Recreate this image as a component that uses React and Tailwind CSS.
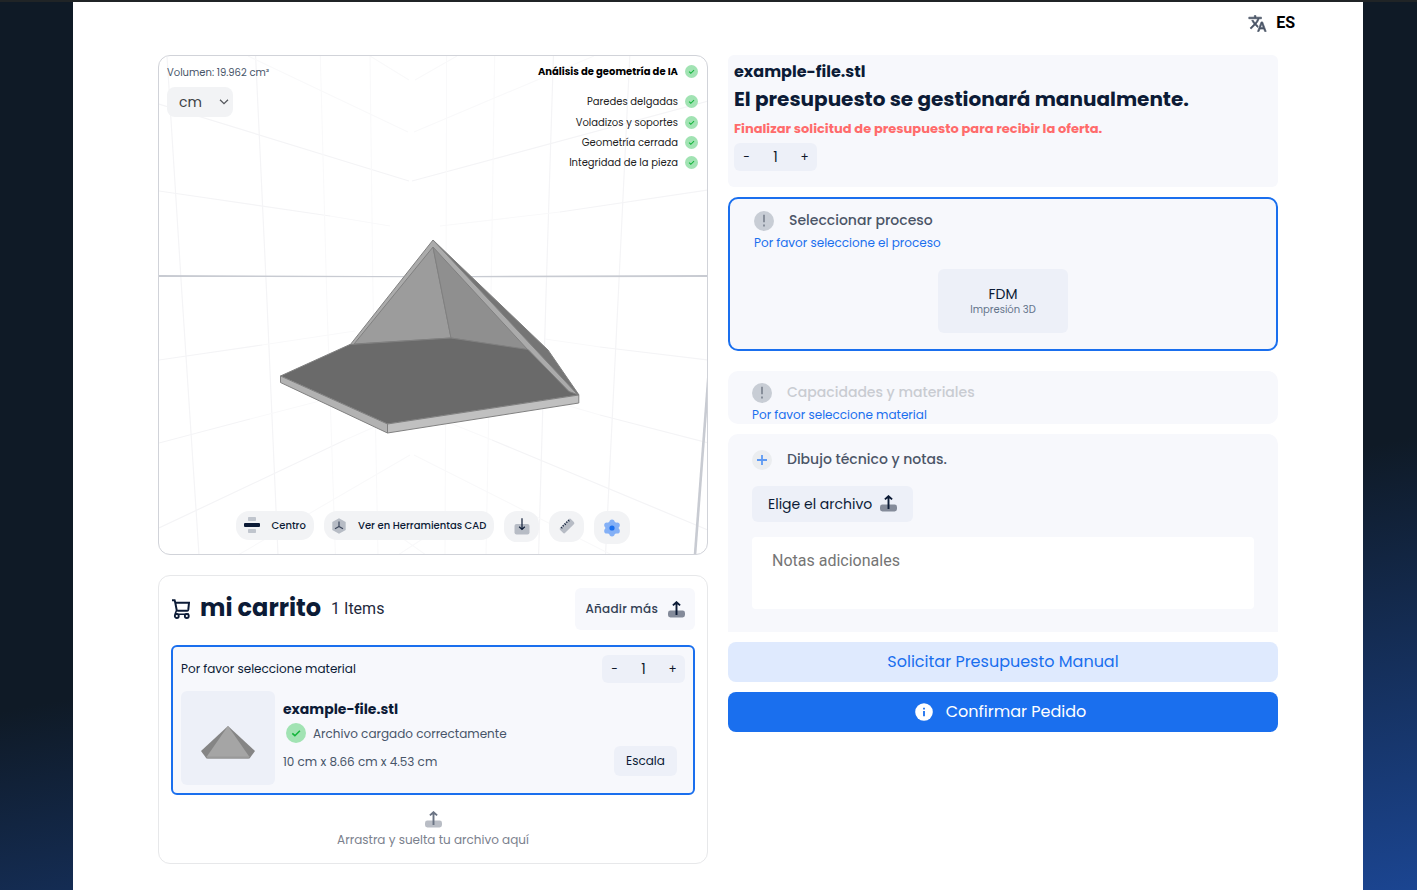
import React from "react";

function TranslateIcon() {
  return (
    <svg viewBox="0 0 24 24" className="mt-[0.5px] h-[19px] w-[19px]" fill="#4b5567" stroke="#4b5567" strokeWidth="0.8">
      <path d="M12.87 15.07l-2.54-2.51.03-.03c1.74-1.94 2.98-4.17 3.71-6.53H17V4h-7V2H8v2H1v1.99h11.17C11.5 7.92 10.44 9.75 9 11.35 8.07 10.32 7.3 9.19 6.69 8h-2c.73 1.63 1.73 3.17 2.98 4.56l-5.09 5.02L4 19l5-5 3.11 3.11.76-2.04zM18.5 10h-2L12 22h2l1.12-3h4.75L21 22h2l-4.5-12zm-2.62 7l1.62-4.33L19.12 17h-3.24z" />
    </svg>
  );
}

function CheckDot({ className }) {
  return (
    <svg viewBox="0 0 20 20" className={className}>
      <circle cx="10" cy="10" r="10" fill="#a1e3b3" />
      <path d="M6.3 10.3l2.6 2.4 5-4.9" fill="none" stroke="#14b53c" strokeWidth="1.6" />
    </svg>
  );
}

function UploadIcon({ className, base = "#848b9a", arrow = "#0c1b36" }) {
  return (
    <svg viewBox="0 0 17 17" className={className}>
      <rect x="0" y="9.5" width="17" height="7" rx="2.4" fill={base} />
      <path d="M8.5 14V1.2M4.9 4.4l3.6-3.2 3.6 3.2" fill="none" stroke={arrow} strokeWidth="1.9" />
    </svg>
  );
}

function CartIcon() {
  return (
    <svg viewBox="0 0 18 20" className="ml-px h-5 w-[18px]" fill="none" stroke="#0c1b36" strokeWidth="2">
      <path d="M0 1.2h2.6l.7 2.6L4.6 10.6c.1.7.6 1.1 1.3 1.1h9.3c.6 0 1-.4 1.1-1l.7-6.9H3.6" />
      <path d="M4.6 11.3l-1.2 3c-.2.5.1.9.7.9H17" strokeWidth="1.6" />
      <circle cx="4.8" cy="17" r="2" strokeWidth="1.8" />
      <circle cx="14.8" cy="17" r="2" strokeWidth="1.8" />
    </svg>
  );
}

function AlertDot() {
  return (
    <svg viewBox="0 0 20 20" className="size-5">
      <circle cx="10" cy="10" r="10" fill="#c8cdd5" />
      <path d="M10 3.8v7.4M10 13.4v2" stroke="#848b98" strokeWidth="1.9" />
    </svg>
  );
}

function Model() {
  return (
    <svg viewBox="159 56 548 498" className="absolute inset-0 h-full w-full">
      <g fill="none" stroke="#f4f4f6" strokeWidth="1.2">
        <path d="M167 56L182 295L199 555M255.6 56L266.7 295L278 555" />
        <path d="M553.4 56L546 295L538.6 555M629.8 56L618.3 295L605.5 555" />
        <path d="M159 104L409 181M412 181L708 101M159 191L330 216M560 212L708 190" />
        <path d="M159 528L345 440M492 440L708 530M159 443L250 419M600 415L708 443M159 360L262 345M600 347L708 360" />
      </g>
      <g fill="none" stroke="#f9f9fa" strokeWidth="1.1">
        <path d="M320.3 56L326.7 295L335.4 555M370 56L373 295L378 555M446.6 56L446 295L445 555M494.7 56L491 295L486 555" />
        <path d="M248 56L408 132M414 132L594 56M370 56L409 80M415 80L457 56" />
        <path d="M330 216L390 226M440 226L560 212M262 345L355 331M545 339L600 347M250 419L370 388M545 399L600 415M345 440L390 420M430 415L492 440" />
        <path d="M410 455L238 555M414 455L612 555" />
        <path d="M398 555L424 538M402 538L426 555" />
      </g>
      <path d="M159 275L433 276.2L708 275V277L433 277.2L159 277Z" fill="#c8cbd2" />
      <path d="M708.5 375L695 555" stroke="#c8cbd2" strokeWidth="2.6" />
      <g stroke="#808080" strokeWidth="1" strokeLinejoin="round">
        <path d="M433 240L548 350L579 395L570 391Z" fill="#757575" />
        <path d="M433 240L350 345L440 400L578 395Z" fill="#ababab" />
        <path d="M433 247L354 344L451 338Z" fill="#9c9c9c" />
        <path d="M433 247L451 338L528 350Z" fill="#8f8f8f" />
        <path d="M280.5 376L350 344.5L451 338L528 349.5L569 391.5L578.5 395L387.5 424Z" fill="#6a6a6a" />
        <path d="M280.5 376L387.5 424V433L280.5 382.5Z" fill="#b2b2b2" />
        <path d="M387.5 424L578.8 395V403L387.5 433Z" fill="#c0c0c0" />
      </g>
    </svg>
  );
}

const checks = ["Paredes delgadas", "Voladizos y soportes", "Geometría cerrada", "Integridad de la pieza"];

function Viewer() {
  return (
    <section className="relative h-[500px] overflow-hidden rounded-xl border border-[#d1d3d9] bg-white">
      <Model />
      <div className="absolute left-2 top-[9px]">
        <p className="text-[10px] leading-4 text-[#475569]">Volumen: 19.962 cm³</p>
        <div className="mt-[6px] flex h-[30px] w-[66px] items-center justify-between rounded-lg bg-[#f2f3f5] pl-3 pr-1 text-sm text-[#3c4043]">
          cm
          <svg viewBox="0 0 10 6" className="h-[6px] w-[10px]">
            <path d="M1 .8l4 3.8L9 .8" fill="none" stroke="#55585d" strokeWidth="1.3" />
          </svg>
        </div>
      </div>
      <div className="absolute right-[9px] top-[9px] flex flex-col items-end text-[10px] leading-[13px] text-[#222]">
        <div className="mb-[17.4px] flex items-center gap-[7px] font-bold text-black">
          Análisis de geometría de IA
          <CheckDot className="size-[13px]" />
        </div>
        <div className="flex flex-col items-end gap-[7.2px]">
          {checks.map((c) => (
            <div key={c} className="flex items-center gap-[7px]">
              {c}
              <CheckDot className="size-[13px]" />
            </div>
          ))}
        </div>
      </div>
      <div className="absolute left-[77px] top-[455px] flex items-start gap-[10px] text-[10px] font-medium text-[#0c1b36]">
        <button className="flex h-[29px] w-[78px] items-center rounded-[13px] bg-[#f2f3f5] pl-2">
          <svg viewBox="0 0 16 18" className="-mt-px h-[18px] w-4">
            <rect x="4" y="1" width="8" height="4" rx=".8" fill="#c0c5cd" />
            <rect x="0" y="7" width="16" height="4" rx="1" fill="#0c1b36" />
            <rect x="4" y="13" width="8" height="4" rx=".8" fill="#c0c5cd" />
          </svg>
          <span className="ml-[11.5px]">Centro</span>
        </button>
        <button className="flex h-[29px] w-[170px] items-center whitespace-nowrap rounded-[13px] bg-[#f2f3f5] pl-2">
          <svg viewBox="0 0 14 16" className="h-4 w-[14px]">
            <path d="M7 .3l6.7 3.7v8L7 15.7.3 12V4z" fill="#b7bcc5" />
            <path d="M7 3.4v5M7 8.4l-4 2.4M7 8.4l4 2.4" stroke="#3b465b" strokeWidth="1.2" />
          </svg>
          <span className="ml-3">Ver en Herramientas CAD</span>
        </button>
        <button className="flex h-[31px] w-[35px] items-center justify-center rounded-[13px] bg-[#f2f3f5]">
          <svg viewBox="0 0 16 17" className="-mt-px h-[17px] w-4">
            <rect x="0.5" y="6" width="15" height="10.5" rx="2" fill="#b7bcc5" />
            <path d="M8 .3v11.2M5.2 8.8L8 11.5l2.8-2.7" fill="none" stroke="#0c1b36" strokeWidth="1.2" />
          </svg>
        </button>
        <button className="flex h-[31px] w-[35px] items-center justify-center rounded-[13px] bg-[#f2f3f5]">
          <svg viewBox="0 0 16 16" className="-mt-px size-4">
            <g transform="rotate(-45 8 8)">
              <rect x="0.3" y="4.4" width="15.4" height="7.2" rx="1.6" fill="#b7bcc5" />
              <path d="M3 4.4v2M5.5 4.4v1.6M8 4.4v2M10.5 4.4v1.6M13 4.4v2" stroke="#0c1b36" strokeWidth="1" />
            </g>
          </svg>
        </button>
        <button className="flex h-[33px] w-9 items-center justify-center rounded-[13px] bg-[#f2f3f5]">
          <svg viewBox="0 0 18 18" className="size-[18px]">
            <g fill="#84b0f6">
              <circle cx="9" cy="9" r="6.8" />
              <circle cx="9" cy="3.2" r="2.6" />
              <circle cx="9" cy="14.8" r="2.6" />
              <circle cx="3.8" cy="6.1" r="2.6" />
              <circle cx="14.2" cy="6.1" r="2.6" />
              <circle cx="3.8" cy="11.9" r="2.6" />
              <circle cx="14.2" cy="11.9" r="2.6" />
            </g>
            <circle cx="9" cy="9" r="2.6" fill="#1a6fee" />
          </svg>
        </button>
      </div>
    </section>
  );
}

function Stepper({ className }) {
  return (
    <div className={`flex h-7 w-[83px] items-center rounded-md bg-[#edf0f8] text-[#0f172a] ${className ?? ""}`}>
      <span className="w-[25px] text-center text-xs">-</span>
      <span className="w-[33px] text-center text-sm">1</span>
      <span className="w-[25px] text-center text-xs">+</span>
    </div>
  );
}

function Cart() {
  return (
    <section className="h-[289px] rounded-xl border border-[#e7e8ea] px-3 pt-3">
      <div className="flex h-[42px] items-center">
        <CartIcon />
        <h2 className="ml-[10px] -mt-[3px] text-2xl font-bold text-[#0c1b36]">mi carrito</h2>
        <span className="ml-[10px] -mt-px font-['Roboto',sans-serif] text-base text-[#1e293b]">1 Items</span>
        <button className="ml-auto flex h-[42px] w-[120px] items-center rounded-md bg-[#f7f8fc] pl-[10.5px] text-xs font-medium tracking-[0.22px] text-[#334155]">
          Añadir más
          <UploadIcon className="ml-[10px] mt-px h-[17px] w-[17px]" />
        </button>
      </div>
      <div className="mt-[15px] h-[150px] rounded-md border-2 border-[#1a6fee] bg-[#f7f8fc] px-2 pt-2">
        <div className="flex items-center justify-between text-xs text-[#0c1b36]">
          Por favor seleccione material
          <Stepper />
        </div>
        <div className="mt-2 flex">
          <div className="flex h-[94px] w-[94px] items-end justify-center rounded-md bg-[#edf0f8] pb-[26px]">
            <svg viewBox="0 0 54 34" className="h-[34px] w-[54px]">
              <path d="M27 1L0 26l5.5 7.5h43L54 26z" fill="#858585" />
              <path d="M27 1L5.5 32h43z" fill="#a5a5a5" />
              <path d="M5 31.5h44l-1.5 2h-41z" fill="#999" />
            </svg>
          </div>
          <div className="ml-2 pt-2 text-xs text-[#475569]">
            <p className="text-sm font-bold leading-5 text-[#0c1b36]">example-file.stl</p>
            <div className="ml-[3px] mt-1 flex items-center gap-[7px]">
              <CheckDot className="size-5" />
              <span className="pt-[2px]">Archivo cargado correctamente</span>
            </div>
            <p className="mt-[11px] leading-4">10 cm x 8.66 cm x 4.53 cm</p>
          </div>
          <button className="ml-auto mr-2 mt-[55px] h-[30px] w-[63px] rounded-md bg-[#edf0f8] text-xs text-[#0c1b36]">
            Escala
          </button>
        </div>
      </div>
      <div className="mt-4 flex flex-col items-center text-xs text-[#7b818d]">
        <UploadIcon className="h-[17px] w-[17px]" base="#b9bdc5" arrow="#6b7484" />
        <p className="mt-[3px] leading-[18px]">Arrastra y suelta tu archivo aquí</p>
      </div>
    </section>
  );
}

function Quote() {
  return (
    <div className="flex w-[550px] flex-col">
      <section className="h-[132px] rounded-md bg-[#f7f8fc] px-[6px] pt-[5px] text-[#0c1b36]">
        <p className="text-base font-bold">example-file.stl</p>
        <h1 className="mt-px text-xl font-bold leading-7">El presupuesto se gestionará manualmente.</h1>
        <p className="mt-[6px] text-[13px] font-bold leading-5 text-[#ff6b6b]">
          Finalizar solicitud de presupuesto para recibir la oferta.
        </p>
        <Stepper className="mt-1" />
      </section>

      <section className="mt-[10px] h-[154px] rounded-[10px] border-2 border-[#1a6fee] bg-[#f7f8fc] px-6 pt-3">
        <div className="flex items-center gap-[15px] text-sm font-medium leading-5 text-[#4b5567]">
          <AlertDot />
          <span className="-mt-[2px]">Seleccionar proceso</span>
        </div>
        <p className="mt-[3px] text-xs leading-[18px] text-[#1a6fee]">Por favor seleccione el proceso</p>
        <button className="mx-auto mt-[17px] flex h-16 w-[130px] flex-col items-center rounded-md bg-[#edf0f8] pt-[15px]">
          <span className="text-sm leading-5 text-[#0c1b36]">FDM</span>
          <span className="text-[10px] leading-3 text-[#64748b]">Impresión 3D</span>
        </button>
      </section>

      <section className="mt-5 h-[53px] rounded-[10px] bg-[#f7f8fc] px-6 pt-3">
        <div className="flex items-center gap-[15px] text-sm font-medium leading-5 text-[#c9ccd2]">
          <AlertDot />
          <span className="-mt-[2px]">Capacidades y materiales</span>
        </div>
        <p className="mt-[3px] text-xs leading-[18px] text-[#1a6fee]">Por favor seleccione material</p>
      </section>

      <section className="mt-[10px] h-[198px] rounded-t-[10px] bg-[#f7f8fc] px-6 pt-4">
        <div className="flex items-center gap-[15px] text-sm font-medium leading-5 text-[#4b5567]">
          <svg viewBox="0 0 20 20" className="size-5">
            <circle cx="10" cy="10" r="10" fill="#ebedf0" />
            <path d="M10 5v10M5 10h10" stroke="#5e99f3" strokeWidth="1.8" />
          </svg>
          <span className="-mt-[2px]">Dibujo técnico y notas.</span>
        </div>
        <button className="mt-4 flex h-9 w-[161px] items-center rounded-md bg-[#edf0f8] pl-4 text-sm text-[#0c1b36]">
          Elige el archivo
          <UploadIcon className="-mt-px ml-2 h-[17px] w-[17px]" />
        </button>
        <div className="mt-[15px] h-[72px] rounded bg-white px-5 pt-3 font-['Roboto',sans-serif] text-base text-[#757575]">
          Notas adicionales
        </div>
      </section>

      <button className="mt-[10px] h-10 rounded-lg bg-[#dfeafe] text-base text-[#1a6fee]">
        Solicitar Presupuesto Manual
      </button>
      <button className="mt-[10px] flex h-10 items-center justify-center gap-[13px] rounded-lg bg-[#1a6fee] pr-[5px] text-base text-white">
        <svg viewBox="0 0 18 18" className="size-[18px]">
          <circle cx="9" cy="9" r="8.8" fill="#fff" />
          <path d="M9 4.8v1.8M9 8v5.2" stroke="#1a6fee" strokeWidth="1.8" />
        </svg>
        Confirmar Pedido
      </button>
    </div>
  );
}

export default function App() {
  return (
    <div className="h-[890px] w-[1417px] overflow-hidden border-t-2 border-[#202426] bg-[linear-gradient(169deg,#0f1a26_61%,#1b4591_100%)] pl-[73px] pr-[54px] font-['Poppins','Inter',sans-serif]">
      <main className="h-full w-[1290px] bg-white">
        <div className="flex h-[53px] justify-end gap-[9px] pr-[68px] pt-[11px]">
          <TranslateIcon />
          <span className="h-5 font-['Roboto',sans-serif] text-base font-bold leading-[19px] text-black">ES</span>
        </div>
        <div className="flex gap-5 pl-[85px]">
          <div className="flex w-[550px] flex-col gap-5">
            <Viewer />
            <Cart />
          </div>
          <Quote />
        </div>
      </main>
    </div>
  );
}
